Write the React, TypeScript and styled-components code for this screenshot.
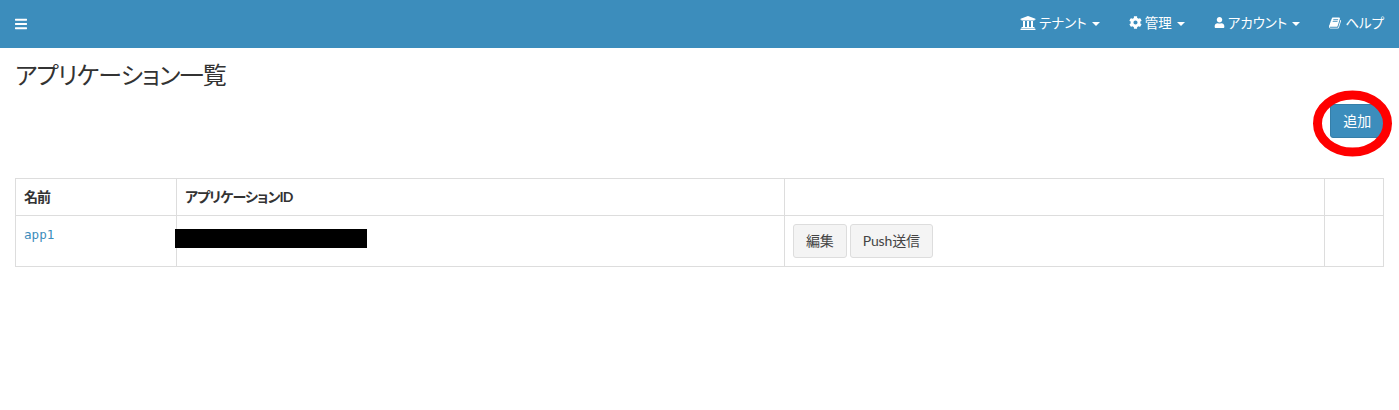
import { FC, ReactNode } from "react";
import styled, { createGlobalStyle } from "styled-components";
import { FaBars, FaCog, FaUniversity, FaUser } from "react-icons/fa";

const GlobalStyle = createGlobalStyle`
  body {
    margin: 0;
    background: #fff;
    color: #333;
    font-family: Lato, "Noto Sans CJK JP", sans-serif;
    font-size: 14px;
    line-height: 20px;
    font-feature-settings: "palt";
  }
`;

const Page = styled.div`
  position: relative;
  min-height: 410px;
`;

const Navbar = styled.header`
  display: flex;
  align-items: center;
  justify-content: space-between;
  height: 48px;
  padding: 0 15px;
  background: #3c8dbc;
  color: #fff;
`;

const MenuToggle = styled.span`
  display: flex;
  margin-top: -1px;
  svg {
    width: 12px;
    height: 14px;
  }
`;

const NavList = styled.nav`
  display: flex;
  align-items: center;
  gap: 29px;
  margin-top: -3px;
`;

const NavItem = styled.a`
  display: flex;
  align-items: center;
  gap: 3px;
  font-size: 13.5px;
  color: #fff;
  white-space: nowrap;
`;

const Caret = styled.span`
  width: 0;
  height: 0;
  margin-left: 2px;
  margin-top: 3px;
  border-top: 4px solid #fff;
  border-left: 4px solid transparent;
  border-right: 4px solid transparent;
`;

const Content = styled.main`
  padding: 0 15px;
`;

const Title = styled.h1`
  margin: 0;
  padding-top: 12px;
  font-size: 24px;
  line-height: 30px;
  font-weight: 400;
  letter-spacing: -0.8px;
`;

const Actions = styled.div`
  display: flex;
  justify-content: flex-end;
  margin-top: 14px;
  margin-bottom: 40px;
`;

const Button = styled.button<{ $primary?: boolean }>`
  height: 34px;
  padding: 0 12px 1px;
  border: 1px solid ${(p) => (p.$primary ? "#367fa9" : "#ddd")};
  border-radius: 3px;
  background: ${(p) => (p.$primary ? "#3c8dbc" : "#f4f4f4")};
  color: ${(p) => (p.$primary ? "#fff" : "#444")};
  font: inherit;
  font-feature-settings: inherit;
  letter-spacing: -0.15px;
`;

const Table = styled.table`
  width: 1368px;
  border-collapse: collapse;
  table-layout: fixed;

  th,
  td {
    border: 1px solid #ddd;
    padding: 8px;
    text-align: left;
    vertical-align: top;
  }
  th {
    height: 20px;
    font-weight: 700;
    letter-spacing: -0.9px;
  }
`;

const AppLink = styled.a`
  display: block;
  margin-top: 1px;
  font-family: "DejaVu Sans Mono", monospace;
  font-size: 12.6px;
  color: #3c8dbc;
`;

const ButtonRow = styled.div`
  display: flex;
  gap: 3px;
`;

const Redaction = styled.div`
  position: absolute;
  left: 175px;
  top: 229px;
  width: 192px;
  height: 19px;
  background: #000;
`;

const Annotation = styled.svg`
  position: absolute;
  left: 1312px;
  top: 90px;
  width: 81px;
  height: 67px;
`;

const BookIcon: FC = () => (
  <svg width="13" height="14" viewBox="0 0 1792 1792" fill="currentColor">
    <path d="M1639 478q40 57 18 129l-275 906q-19 64-76.5 107.5t-122.5 43.5h-923q-77 0-148.5-53.5t-99.5-131.5q-24-67-2-127 0-4 3-27t4-37q1-8-3-21.5t-3-19.5q2-11 8-21t16.5-23.5 16.5-23.5q23-38 45-91.5t30-91.5q3-10 .5-30t-.5-28q3-11 17-28t17-23q21-36 42-92t25-90q1-9-2.5-32t.5-28q4-13 22-30.5t22-22.5q19-26 42.5-84.5t27.5-96.5q1-8-3-25.5t-2-26.5q2-8 9-18t18-23 17-21q8-12 16.5-30.5t15-35 16-36 19.5-32 26.5-23.5 36-11.5 47.5 5.5l-1 3q38-9 51-9h761q74 0 114 56t18 130l-274 906q-36 119-71.5 153.5t-128.5 34.5h-869q-27 0-38 15-11 16-1 43 24 70 144 70h923q29 0 56-15.5t35-41.5l300-987q7-22 5-57 38 15 59 43zm-1064 2q-4 13 2 22.5t20 9.5h608q13 0 25.5-9.5t16.5-22.5l21-64q4-13-2-22.5t-20-9.5h-608q-13 0-25.5 9.5t-16.5 22.5zm-83 256q-4 13 2 22.5t20 9.5h608q13 0 25.5-9.5t16.5-22.5l21-64q4-13-2-22.5t-20-9.5h-608q-13 0-25.5 9.5t-16.5 22.5z" />
  </svg>
);

const navItems: { label: string; icon: ReactNode; caret: boolean }[] = [
  { label: "テナント", icon: <FaUniversity size={16} />, caret: true },
  { label: "管理", icon: <FaCog size={13} />, caret: true },
  { label: "アカウント", icon: <FaUser size={11} />, caret: true },
  { label: "ヘルプ", icon: <BookIcon />, caret: false },
];

const App: FC = () => (
  <Page>
    <GlobalStyle />
    <Navbar>
      <MenuToggle>
        <FaBars />
      </MenuToggle>
      <NavList>
        {navItems.map((item) => (
          <NavItem key={item.label}>
            {item.icon}
            {item.label}
            {item.caret && <Caret />}
          </NavItem>
        ))}
      </NavList>
    </Navbar>
    <Content>
      <Title>アプリケーション一覧</Title>
      <Actions>
        <Button $primary>追加</Button>
      </Actions>
      <Table>
        <colgroup>
          <col style={{ width: 161 }} />
          <col style={{ width: 608 }} />
          <col style={{ width: 540 }} />
          <col style={{ width: 59 }} />
        </colgroup>
        <thead>
          <tr>
            <th>名前</th>
            <th>アプリケーションID</th>
            <th></th>
            <th></th>
          </tr>
        </thead>
        <tbody>
          <tr>
            <td>
              <AppLink>app1</AppLink>
            </td>
            <td></td>
            <td>
              <ButtonRow>
                <Button>編集</Button>
                <Button>Push送信</Button>
              </ButtonRow>
            </td>
            <td></td>
          </tr>
        </tbody>
      </Table>
    </Content>
    <Redaction />
    <Annotation viewBox="0 0 81 67">
      <ellipse cx="40.5" cy="33.5" rx="35" ry="28.5" fill="none" stroke="#f00" strokeWidth="9" />
    </Annotation>
  </Page>
);

export default App;
